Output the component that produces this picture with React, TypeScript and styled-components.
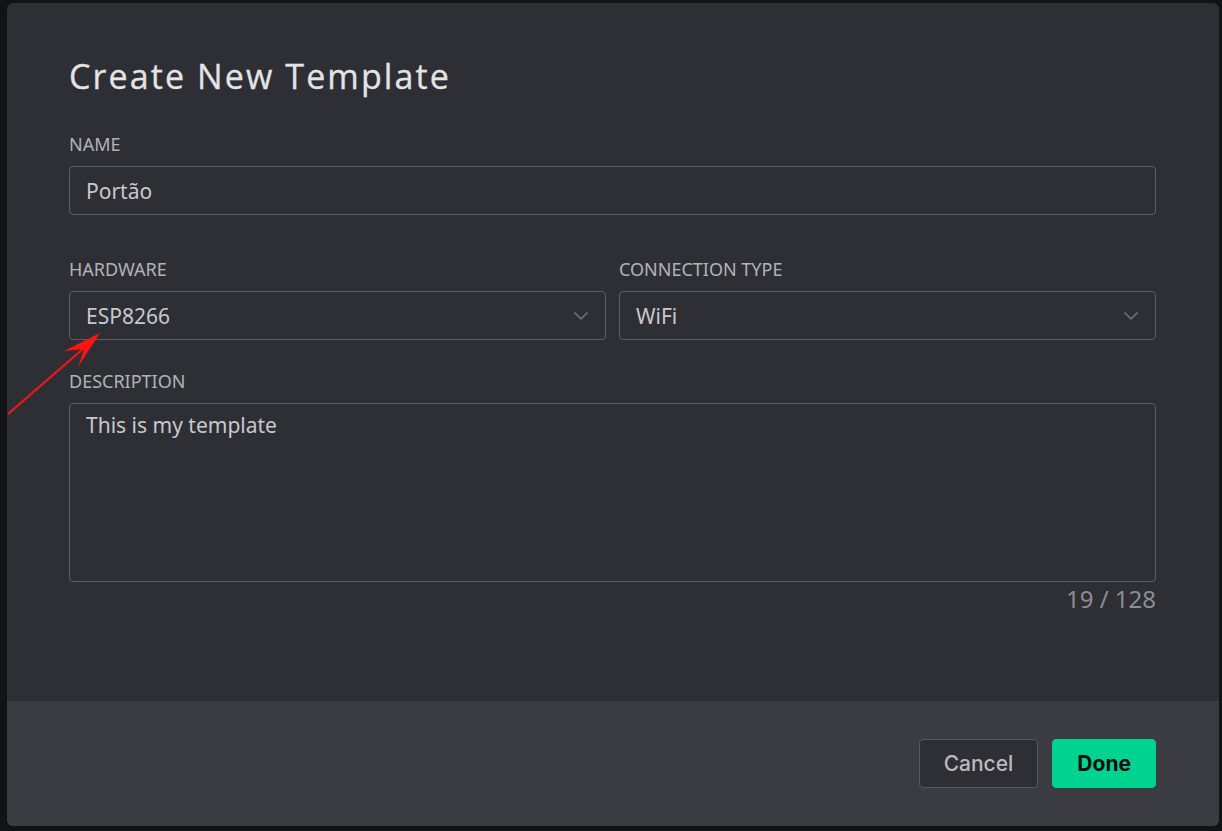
import React from "react";
import styled, { createGlobalStyle } from "styled-components";

const Global = createGlobalStyle`
  html, body { margin: 0; padding: 0; background: #121315; }
  #root { width: 1222px; height: 831px; }
`;

const Page = styled.div`
  position: relative;
  box-sizing: border-box;
  width: 1222px;
  height: 831px;
  padding: 3px 3px 5px 7px;
  display: flex;
  background: #121315;
`;

const Modal = styled.div`
  flex: 1;
  display: flex;
  flex-direction: column;
  background: #2e2f34;
  border-radius: 6px;
  overflow: hidden;
`;

const Body = styled.div`
  flex: 1;
  padding: 51px 63px 0 62px;
  display: flex;
  flex-direction: column;
`;

const Title = styled.h1`
  margin: 0 0 35px;
  font-family: "Open Sans", "Lato", sans-serif;
  font-weight: 500;
  font-size: 34px;
  letter-spacing: 2.1px;
  line-height: 44px;
  color: #e4e4e6;
  -webkit-text-stroke: 0.3px #e4e4e6;
`;

const Row = styled.div`
  display: grid;
  grid-template-columns: 537px 1fr;
  gap: 13px;
`;

const Field = styled.div<{ $mb?: number }>`
  display: flex;
  flex-direction: column;
  margin-bottom: ${(p) => p.$mb ?? 0}px;
`;

const Label = styled.label`
  font-family: "Noto Sans", "Open Sans", sans-serif;
  font-size: 18px;
  line-height: 22px;
  color: #b2b3b8;
  margin-bottom: 11px;
`;

const Box = styled.div<{ $h?: number }>`
  box-sizing: border-box;
  height: ${(p) => p.$h ?? 49}px;
  border: 1px solid #5d5e63;
  border-radius: 4px;
  padding: 0 16px;
  display: flex;
  align-items: ${(p) => (p.$h ? "flex-start" : "center")};
  justify-content: space-between;
  padding-top: ${(p) => (p.$h ? 7 : 0)}px;
  font-family: "Noto Sans", "Open Sans", sans-serif;
  font-size: 21px;
  line-height: 28px;
  color: #c9c9cd;
`;

const Counter = styled.div`
  align-self: flex-end;
  margin-top: 3px;
  font-family: "Noto Sans", "Open Sans", sans-serif;
  font-size: 24px;
  line-height: 28px;
  color: #8c8d92;
`;

const Footer = styled.div`
  height: 125px;
  background: #3b3c42;
  display: flex;
  align-items: center;
  justify-content: flex-end;
  gap: 14px;
  padding-right: 63px;
`;

const Button = styled.button<{ $primary?: boolean }>`
  box-sizing: border-box;
  height: 49px;
  padding: 0 24px;
  border-radius: 4px;
  border: 1px solid ${(p) => (p.$primary ? "#00d390" : "#58595e")};
  background: ${(p) => (p.$primary ? "#00d390" : "#2e2f34")};
  color: ${(p) => (p.$primary ? "#0b0c0d" : "#b9babe")};
  font-family: "Inter", "Lato", sans-serif;
  font-weight: ${(p) => (p.$primary ? 700 : 500)};
  font-size: 21px;
`;

const Arrow = styled.svg`
  position: absolute;
  left: 0;
  top: 320px;
  pointer-events: none;
`;

const Chevron = () => (
  <svg width="16" height="10" viewBox="0 0 16 10">
    <path d="M1.5 1.5 L8 8 L14.5 1.5" fill="none" stroke="#75767b" strokeWidth="1.5" />
  </svg>
);

export default function App() {
  return (
    <>
      <Global />
      <Page>
        <Modal>
          <Body>
            <Title>Create New Template</Title>
            <Field $mb={43}>
              <Label>NAME</Label>
              <Box>Portão</Box>
            </Field>
            <Row>
              <Field $mb={30}>
                <Label>HARDWARE</Label>
                <Box>
                  ESP8266
                  <Chevron />
                </Box>
              </Field>
              <Field $mb={30}>
                <Label>CONNECTION TYPE</Label>
                <Box>
                  WiFi
                  <Chevron />
                </Box>
              </Field>
            </Row>
            <Field>
              <Label>DESCRIPTION</Label>
              <Box $h={179}>This is my template</Box>
            </Field>
            <Counter>19 / 128</Counter>
          </Body>
          <Footer>
            <Button>Cancel</Button>
            <Button $primary>Done</Button>
          </Footer>
        </Modal>
        <Arrow width="110" height="100" viewBox="0 320 110 100">
          <line x1="8" y1="414" x2="84" y2="348" stroke="#ff1414" strokeWidth="2" />
          <polygon points="100,333 64,351 84,349 78,367" fill="#ff1414" />
        </Arrow>
      </Page>
    </>
  );
}
